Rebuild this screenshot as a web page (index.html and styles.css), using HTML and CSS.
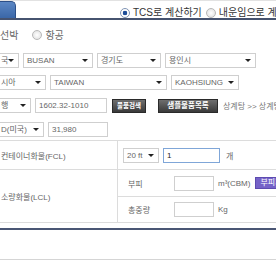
FILE: index.html
```html
<!DOCTYPE html>
<html lang="ko">
<head>
    <meta charset="UTF-8">
    <meta name="viewport" content="width=device-width, initial-scale=1.0">
    <title>운임 계산</title>
    <link rel="stylesheet" href="styles.css">
</head>
<body>
    <div class="calc-wrap">
        <!-- 계산 방식 탭 -->
        <div class="tab-bar">
            <span class="tab"></span>
            <div class="calc-type">
                <span class="radio checked">TCS로 계산하기</span>
                <span class="radio">내운임으로 계산하기</span>
            </div>
        </div>

        <!-- 운송 수단 -->
        <div class="mode-row">
            <span>선박</span>
            <span class="radio mode-air">항공</span>
        </div>

        <!-- 출발지 -->
        <div class="field-row">
            <div class="select cut sel-nation">국</div>
            <div class="select sel-port">BUSAN</div>
            <div class="select sel-state">경기도</div>
            <div class="select sel-city">용인시</div>
        </div>

        <!-- 도착지 -->
        <div class="field-row">
            <div class="select cut sel-region">시아</div>
            <div class="select sel-country">TAIWAN</div>
            <div class="select sel-dest">KAOHSIUNG</div>
        </div>

        <!-- 품목 -->
        <div class="field-row tall">
            <div class="select cut sel-type">행</div>
            <input class="input in-hs" type="text" value="1602.32-1010">
            <button class="btn-dark btn-search">물품검색</button>
            <button class="btn-dark btn-sample">샘플물품목록</button>
            <span class="item-path">상계탕 &gt;&gt; 상계탕</span>
        </div>

        <!-- 금액 -->
        <div class="field-row">
            <div class="select cut sel-currency">D(미국)</div>
            <input class="input in-price" type="text" value="31,980">
        </div>

        <!-- 화물 -->
        <div class="cargo">
            <div class="cargo-row fcl">
                <div class="cargo-label">컨테이너화물(FCL)</div>
                <div class="cargo-value">
                    <div class="select sel-ft">20 ft</div>
                    <input class="input in-count focused" type="text" value="1">
                    <span class="unit unit-count">개</span>
                </div>
            </div>
            <div class="cargo-row">
                <div class="cargo-label">소량화물(LCL)</div>
                <div class="cargo-subs">
                    <div class="sub-row">
                        <span class="sub-label">부피</span>
                        <input class="input in-small" type="text">
                        <span class="unit">m³(CBM)</span>
                        <button class="btn-purple">부피계산</button>
                    </div>
                    <div class="sub-row">
                        <span class="sub-label">총중량</span>
                        <input class="input in-small" type="text">
                        <span class="unit">Kg</span>
                    </div>
                </div>
            </div>
        </div>

        <div class="bottom-area"></div>
    </div>
</body>
</html>
```

FILE: styles.css
```css
/* GENERAL */
* {
    box-sizing: border-box;
}

body {
    margin: 0;
    background-color: #fff;
    font-family: "Liberation Sans", "Noto Sans CJK KR", sans-serif;
    font-size: 8px;
    color: #666;
    overflow: hidden;
}

.calc-wrap {
    width: 276px;
    overflow: hidden;
    white-space: nowrap;
}

/* TAB BAR */
.tab-bar {
    display: flex;
    align-items: flex-end;
    height: 20px;
    border-top: 1px solid #e2e2e2;
    border-bottom: 2px solid #46536f;
}

.tab {
    flex-shrink: 0;
    width: 16px;
    height: 17px;
    background: linear-gradient(#5b87c5, #3b67a7);
    border: 1px solid #2c4f88;
    border-left: 0;
    border-bottom: 0;
    border-radius: 0 5px 0 0;
}

.calc-type {
    display: flex;
    gap: 4px;
    flex-shrink: 0;
    margin-left: 104px;
    font-size: 10px;
    line-height: 11px;
    color: #333;
}

/* RADIO */
.radio {
    display: inline-flex;
    align-items: center;
}

.radio::before {
    content: "";
    width: 8px;
    height: 8px;
    margin-right: 3px;
    border: 1px solid #b8b8b8;
    border-radius: 50%;
    background: radial-gradient(#fff, #dcdcdc);
}

.radio.checked::before {
    border-color: #8094b4;
    background: radial-gradient(circle, #1d4d98 0 2px, #fff 2.6px);
}

.mode-row {
    display: flex;
    align-items: center;
    height: 29px;
    font-size: 10px;
}

.mode-air {
    margin-left: 14px;
}

/* FIELD ROWS */
.field-row {
    display: flex;
    align-items: center;
    gap: 4px;
    height: 22px;
}

.field-row.tall {
    height: 25px;
}

.select {
    position: relative;
    flex-shrink: 0;
    height: 15px;
    line-height: 13px;
    padding: 0 12px 0 3px;
    border: 1px solid #cfcfcf;
    background-color: #fff;
    overflow: hidden;
}

.select::after {
    content: "";
    position: absolute;
    right: 4px;
    top: 5px;
    border-left: 3px solid transparent;
    border-right: 3px solid transparent;
    border-top: 3px solid #222;
}

.select.cut {
    border-left: 0;
    padding-left: 1px;
}

.sel-nation { width: 19px; }
.sel-port { width: 70px; }
.sel-state { width: 64px; }
.sel-city { width: 91px; }
.sel-region { width: 46px; }
.sel-country { width: 117px; }
.sel-dest { width: 68px; }
.sel-type { width: 31px; }
.sel-currency { width: 44px; }
.sel-ft { width: 36px; }

.input {
    flex-shrink: 0;
    height: 15px;
    padding: 0 3px;
    border: 1px solid #cfcfcf;
    font-family: inherit;
    font-size: 8px;
    color: #666;
    outline: none;
}

.in-hs { width: 72px; }
.in-price { width: 60px; }
.in-count { width: 57px; }
.in-small { width: 40px; }

.input.focused {
    border-color: #7fa6d8;
    color: #222;
}

/* BUTTONS */
.btn-dark {
    flex-shrink: 0;
    height: 14px;
    padding: 0;
    border: 1px solid #2a2a2a;
    background: linear-gradient(#6e6e6e, #3a3a3a);
    color: #fff;
    font-family: inherit;
    font-weight: bold;
    line-height: 12px;
}

.btn-search {
    width: 34px;
    margin-left: 1px;
    font-size: 6.5px;
}

.btn-sample {
    width: 60px;
    margin-left: 8px;
    font-size: 7.5px;
}

.item-path {
    margin-left: 1px;
    color: #777;
}

.btn-purple {
    flex-shrink: 0;
    height: 12px;
    margin-left: 5px;
    padding: 0 4px;
    border: 1px solid #5d4bb0;
    background-color: #7562c8;
    color: #fff;
    font-family: inherit;
    font-size: 8px;
    line-height: 10px;
}

/* CARGO TABLE */
.cargo {
    border-top: 1px solid #dcdcdc;
    border-bottom: 1px solid #dcdcdc;
}

.cargo-row {
    display: flex;
}

.cargo-row + .cargo-row {
    border-top: 1px solid #dcdcdc;
}

.cargo-row.fcl {
    height: 28px;
}

.cargo-label {
    display: flex;
    align-items: center;
    flex-shrink: 0;
    width: 118px;
    padding-left: 1px;
    border-right: 1px solid #dcdcdc;
}

.cargo-value {
    display: flex;
    align-items: center;
    gap: 4px;
    padding-left: 5px;
}

.unit {
    margin-left: 4px;
}

.unit-count {
    margin-left: 2px;
}

.cargo-subs {
    flex: 1;
}

.sub-row {
    display: flex;
    align-items: center;
    height: 26px;
    padding-left: 10px;
}

.sub-row + .sub-row {
    border-top: 1px solid #dcdcdc;
}

.sub-label {
    width: 46px;
}

/* BOTTOM */
.bottom-area {
    height: 32px;
    margin-top: 5px;
    border-top: 2px solid #4a5674;
    border-bottom: 1px solid #d5d5d5;
}
```
